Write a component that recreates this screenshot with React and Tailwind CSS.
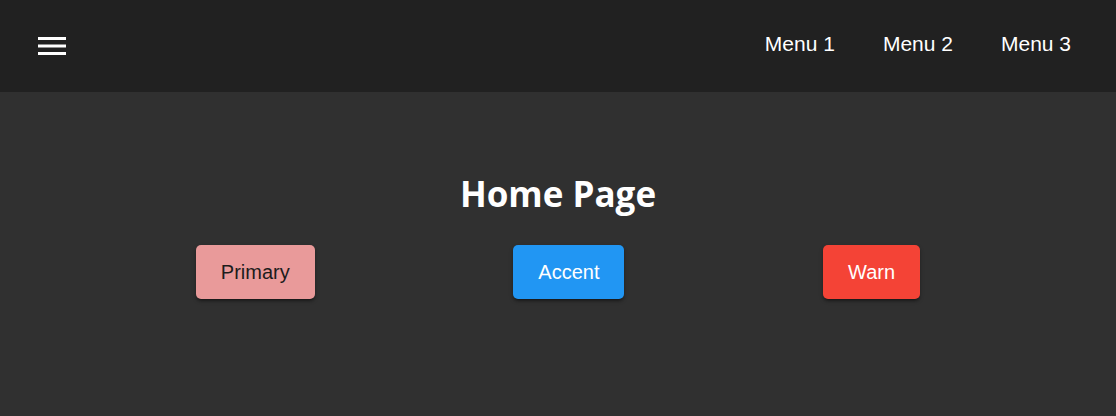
export default function App() {
  return (
    <div className="min-h-screen bg-[#303030] font-['Liberation_Sans',Arial,sans-serif]">
      <header className="h-[92px] bg-[#212121] flex items-center justify-between pl-[38px] pr-[29px]">
        <button className="text-white">
          <svg width="28" height="18" viewBox="0 0 28 18" className="block">
            <rect x="0" y="0" width="28" height="3" fill="white" />
            <rect x="0" y="7.5" width="28" height="3" fill="white" />
            <rect x="0" y="15" width="28" height="3" fill="white" />
          </svg>
        </button>
        <nav className="flex items-center gap-[16px] text-white text-[21px] pb-[5px]">
          <a href="#" className="px-4">Menu 1</a>
          <a href="#" className="px-4">Menu 2</a>
          <a href="#" className="px-4">Menu 3</a>
        </nav>
      </header>
      <main className="pt-[80px]">
        <h1 className="text-center text-white text-[35px] font-bold leading-[44px] font-['Open_Sans',sans-serif]">
          Home Page
        </h1>
        <div className="mx-auto w-[923px] flex justify-around mt-[29px]">
          <button className="h-[54px] px-[25px] rounded-[5px] bg-[#e99a9a] text-[#1c1c1c] text-[20px] shadow-[0_3px_3px_-2px_rgba(0,0,0,0.4),0_2px_4px_rgba(0,0,0,0.3)]">
            Primary
          </button>
          <button className="h-[54px] px-[25px] rounded-[5px] bg-[#2196f3] text-white text-[20px] shadow-[0_3px_3px_-2px_rgba(0,0,0,0.4),0_2px_4px_rgba(0,0,0,0.3)]">
            Accent
          </button>
          <button className="h-[54px] px-[25px] rounded-[5px] bg-[#f44336] text-white text-[20px] shadow-[0_3px_3px_-2px_rgba(0,0,0,0.4),0_2px_4px_rgba(0,0,0,0.3)]">
            Warn
          </button>
        </div>
      </main>
    </div>
  );
}
